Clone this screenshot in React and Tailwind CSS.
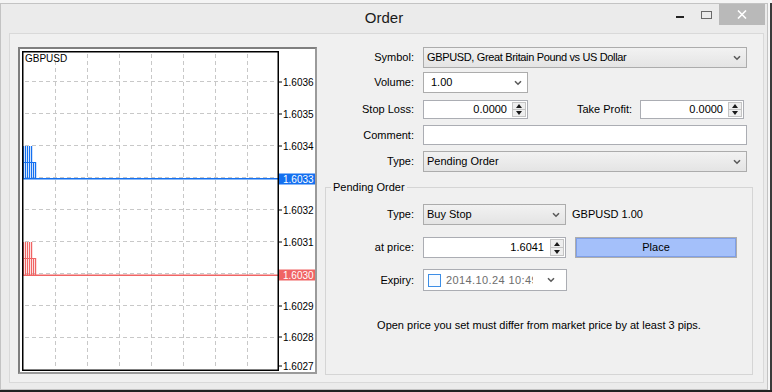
import React from "react";

const gridX = [55, 87, 119, 151, 183, 215, 247];
const gridY = [81, 113, 145, 177, 209, 241, 273, 305, 337];
const prices = [
  [82, "1.6036"],
  [114, "1.6035"],
  [146, "1.6034"],
  [179, "1.6033", "#1470f0"],
  [210, "1.6032"],
  [242, "1.6031"],
  [275, "1.6030", "#f06464"],
  [306, "1.6029"],
  [337, "1.6028"],
  [366, "1.6027"],
];

function Bars({ top, color }) {
  const tall = [23, 25, 27, 29, 31];
  const short = [22, 33, 35];
  return (
    <g fill={color}>
      {tall.map((x) => (
        <rect key={"t" + x} x={x} y={top} width="1.2" height={33} />
      ))}
      {short.map((x) => (
        <rect key={"s" + x} x={x} y={top + 16} width="1.2" height={17} />
      ))}
      <rect x="22" y={top + 16} width="14" height="1" />
    </g>
  );
}

function Chart() {
  return (
    <svg width="295" height="323" viewBox="20 49 295 323" className="block">
      <rect x="20" y="49" width="295" height="323" fill="#fff" />
      <g stroke="#c8c8c8" strokeWidth="1" strokeDasharray="4 3">
        {gridX.map((x) => (
          <line key={x} x1={x + 0.5} y1="54" x2={x + 0.5} y2="369" />
        ))}
        {gridY.map((y) => (
          <line key={y} x1="25" y1={y + 0.5} x2="277" y2={y + 0.5} />
        ))}
      </g>
      <Bars top={146} color="#1470f0" />
      <rect x="22" y="178" width="256" height="1.5" fill="#1470f0" />
      <Bars top={242} color="#f06464" />
      <rect x="22" y="274.5" width="256" height="1.5" fill="#f06464" />
      <rect x="22.75" y="51.75" width="255.5" height="318.5" fill="none" stroke="#000" strokeWidth="1.5" />
      <text x="25" y="58.5" dominantBaseline="central" fontSize="10" fontFamily="Liberation Sans, Arial, sans-serif" fill="#000">
        GBPUSD
      </text>
      {prices.map(([y, label, bg]) => (
        <g key={label}>
          <rect x="279" y={y - 0.5} width="3" height="1" fill="#000" />
          {bg && <rect x="279" y={y - 5.5} width="36" height="11" fill={bg} />}
          <text x="283" y={y} dominantBaseline="central" fontSize="10" fontFamily="Liberation Sans, Arial, sans-serif" fill={bg ? "#fff" : "#000"}>
            {label}
          </text>
        </g>
      ))}
    </svg>
  );
}

function Chevron() {
  return (
    <svg width="8" height="6" viewBox="0 0 8 6" className="shrink-0">
      <path d="M1 1.2 L4 4.2 L7 1.2" fill="none" stroke="#5a5a5a" strokeWidth="1.6" />
    </svg>
  );
}

function Spin() {
  return (
    <div className="flex h-full w-[15px] shrink-0 flex-col py-[1px] pr-[1px]">
      <div className="flex flex-1 items-center justify-center border border-[#c4c4c4] bg-[#eeeeee]">
        <svg width="6" height="4" viewBox="0 0 6 4">
          <path d="M0 4 L3 0 L6 4Z" fill="#1a1a1a" />
        </svg>
      </div>
      <div className="flex flex-1 items-center justify-center border border-t-0 border-[#c4c4c4] bg-[#eeeeee]">
        <svg width="6" height="4" viewBox="0 0 6 4">
          <path d="M0 0 L3 4 L6 0Z" fill="#1a1a1a" />
        </svg>
      </div>
    </div>
  );
}

function Select({ value, className = "", white = false, pl = "pl-[3px]", textClass = "" }) {
  return (
    <div
      className={`flex items-center justify-between border border-[#acacac] pr-[5px] ${pl} ${
        white ? "bg-white" : "bg-linear-to-b from-[#f2f2f2] to-[#e4e4e4]"
      } ${className}`}
    >
      <span className={`whitespace-nowrap ${textClass}`}>{value}</span>
      <Chevron />
    </div>
  );
}

function NumberBox({ value, className = "", pr = "pr-[5px]" }) {
  return (
    <div className={`flex items-center border border-[#abadb3] bg-white ${className}`}>
      <span className={`flex-1 text-right ${pr}`}>{value}</span>
      <Spin />
    </div>
  );
}

function Row({ label, children, className = "", labelW = "w-[89px]" }) {
  return (
    <div className={`flex items-center ${className}`}>
      <div className={`${labelW} shrink-0 text-right whitespace-nowrap`}>{label}</div>
      <div className="ml-[9px] flex items-center">{children}</div>
    </div>
  );
}

export default function App() {
  return (
    <div className="flex h-[392px] w-[772px] flex-col overflow-hidden bg-[#2a2a2a] font-['Liberation_Sans',Arial,sans-serif] text-[11px] text-black">
      <div className="h-[3px] shrink-0 bg-[#f4f4f4]" />
      <div className="flex h-[387px] shrink-0">
        <div className="flex h-full w-[768px] flex-col border border-[#c3c3c3] bg-[#ebebeb]">
          {/* title bar */}
          <div className="grid h-[29px] shrink-0 grid-cols-[1fr_auto_1fr]">
            <div />
            <div className="pt-[4px] text-[15px] leading-[20px] text-[#1a1a1a]">Order</div>
            <div className="flex items-start justify-end pr-[2px]">
              <div className="mt-[12px] h-[2px] w-[8px] bg-[#222]" />
              <div className="ml-[17px] mt-[7px] h-[8px] w-[11px] border border-[#6a6a6a]" />
              <div className="ml-[7px] flex h-[21px] w-[46px] items-center justify-center bg-[#b9b9b9]">
                <svg width="10" height="9" viewBox="0 0 10 9">
                  <path d="M1 0.5 L9 8.5 M9 0.5 L1 8.5" stroke="#fff" strokeWidth="1.6" />
                </svg>
              </div>
            </div>
          </div>

          {/* content panel */}
          <div className="ml-[8px] flex h-[350px] w-[755px] shrink-0 border border-[#d9d9d9] bg-[#f0f0f0]">
            <div className="ml-[8px] mt-[13px] h-[327px] w-[299px] shrink-0 border-2 border-[#9a9a9a] border-t-[#7f7f7f] border-l-[#7f7f7f] bg-white">
              <Chart />
            </div>

            <div className="ml-[8px] w-[428px] shrink-0">
              <Row label="Symbol:" className="mt-[13px]">
                <Select
                  value="GBPUSD, Great Britain Pound vs US Dollar"
                  textClass="tracking-[-0.35px]"
                  className="h-[21px] w-[324px]"
                />
              </Row>
              <Row label="Volume:" className="mt-[4px]">
                <Select value="1.00" white pl="pl-[7px]" className="h-[21px] w-[105px]" />
              </Row>
              <div className="mt-[7px] flex items-center">
                <Row label="Stop Loss:">
                  <NumberBox value="0.0000" className="h-[19px] w-[105px]" />
                </Row>
                <div className="w-[104px] shrink-0 text-right">Take Profit:</div>
                <NumberBox value="0.0000" className="ml-[8px] h-[19px] w-[104px]" />
              </div>
              <Row label="Comment:" className="mt-[6px]">
                <div className="h-[20px] w-[324px] border border-[#abadb3] bg-white" />
              </Row>
              <Row label="Type:" className="mt-[6px]">
                <Select value="Pending Order" className="h-[21px] w-[324px]" />
              </Row>

              <fieldset className="mt-[7px] h-[196px] w-[428px] border border-[#d5d5d5]">
                <legend className="ml-[5px] px-[2px] leading-[16px]">Pending Order</legend>
                <Row label="Type:" labelW="w-[88px]" className="mt-[9px]">
                  <Select value="Buy Stop" className="h-[21px] w-[143px]" />
                  <span className="ml-[6px] whitespace-nowrap">GBPUSD 1.00</span>
                </Row>
                <Row label="at price:" labelW="w-[88px]" className="mt-[12px]">
                  <NumberBox value="1.6041" pr="pr-[6px]" className="h-[21px] w-[143px]" />
                  <div className="ml-[9px] flex h-[21px] w-[162px] items-center justify-center border border-[#adadad] bg-[#a4c0fa] shadow-[inset_0_0_0_1px_#7f9fe8]">
                    Place
                  </div>
                </Row>
                <Row label="Expiry:" labelW="w-[88px]" className="mt-[11px]">
                  <div className="flex h-[22px] w-[144px] items-center border border-[#abadb3] bg-white pl-[4px]">
                    <div className="h-[13px] w-[13px] shrink-0 border border-[#3d8ee6] bg-[#f7fbff]" />
                    <span className="ml-[5px] w-[87px] shrink-0 overflow-hidden whitespace-nowrap tracking-[0.4px] text-[#6d6d6d]">
                      2014.10.24 10:49
                    </span>
                    <span className="ml-[14px]">
                      <Chevron />
                    </span>
                  </div>
                </Row>
                <div className="mt-[26px] text-center leading-[16px]">
                  Open price you set must differ from market price by at least 3 pips.
                </div>
              </fieldset>
            </div>
          </div>
        </div>
        <div className="flex w-[4px] shrink-0 bg-[#f6f6f6]">
          <div className="ml-auto w-[2px] bg-[#3a3a3a]" />
        </div>
      </div>
      <div className="h-[2px] shrink-0 bg-[#222]" />
    </div>
  );
}
